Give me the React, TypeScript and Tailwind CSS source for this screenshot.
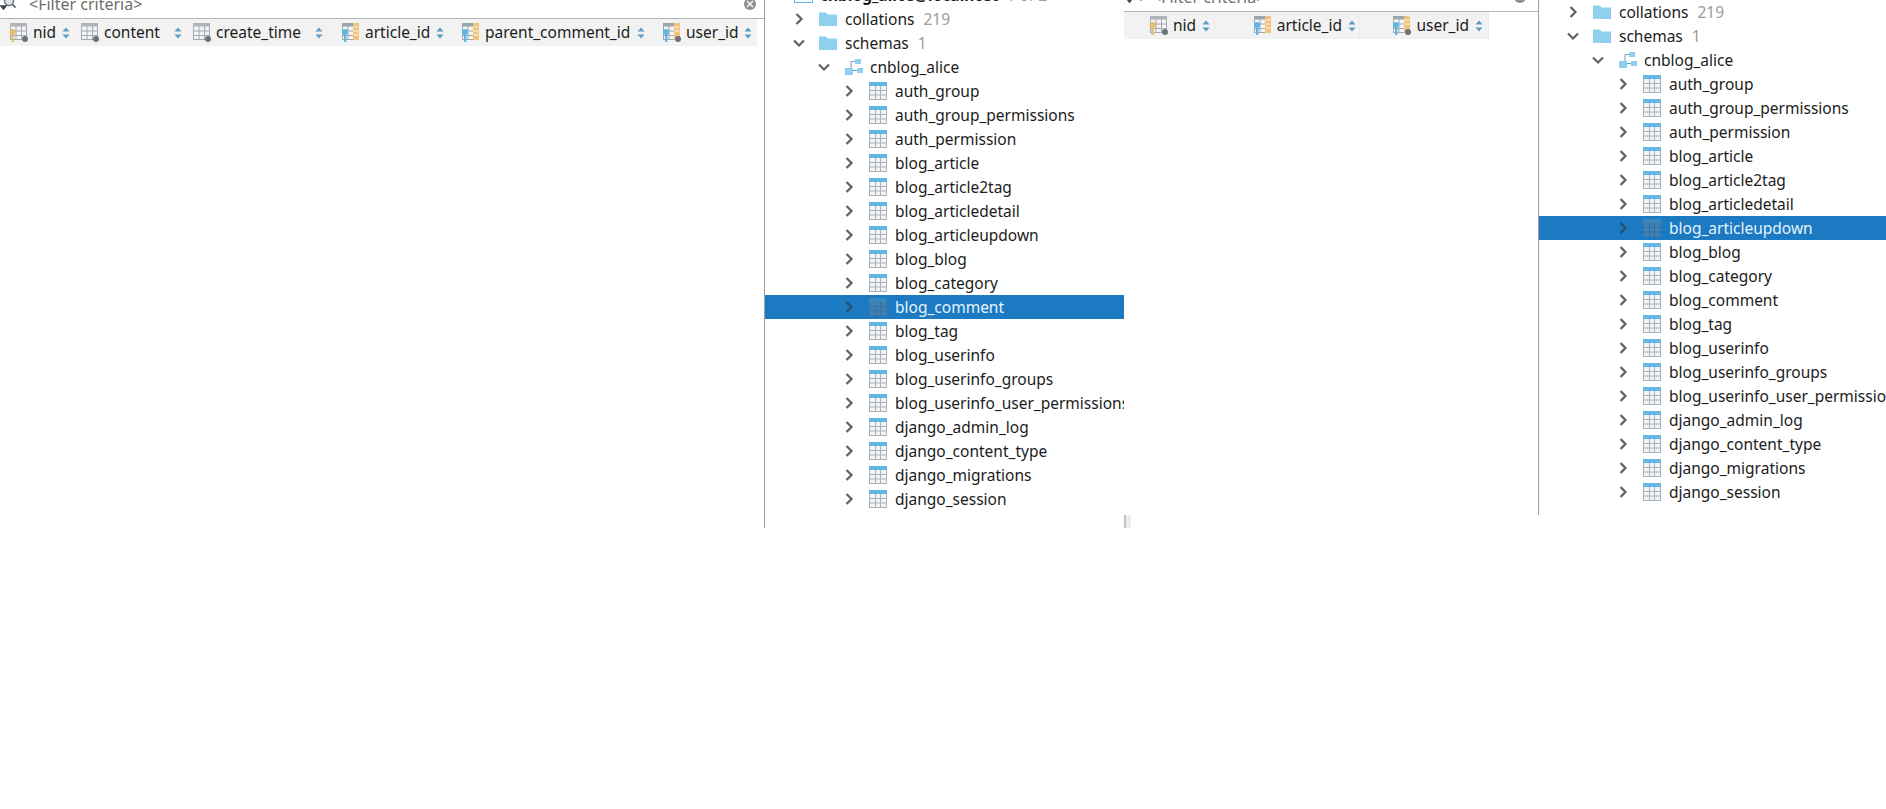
import React from "react";

const font = { fontFamily: '"Noto Sans", "Liberation Sans", sans-serif' };

function TableIcon({ selected = false }: { selected?: boolean }) {
  return (
    <svg width="18" height="18" viewBox="0 0 18 18" className="shrink-0">
      <rect x="0.5" y="0.5" width="17" height="17" fill={selected ? "#3f80b5" : "#f2f3f5"} stroke={selected ? "#3b78a8" : "#a9b2ba"} />
      <rect x="0" y="0" width="18" height="4" fill={selected ? "#3a86bd" : "#62b8e3"} />
      <path d="M6.5 4v14M11.5 4v14M0 8.5h18M0 13h18" stroke={selected ? "#34719f" : "#a9b2ba"} strokeWidth="1" fill="none" />
    </svg>
  );
}

function Chevron({ open = false, dark = false }: { open?: boolean; dark?: boolean }) {
  return (
    <svg width="14" height="14" viewBox="0 0 14 14" className="shrink-0">
      <path d={open ? "M2 4.5l5 5 5-5" : "M4.5 2l5 5-5 5"} fill="none" stroke={dark ? "#2a4d68" : "#5e6266"} strokeWidth="2.2" />
    </svg>
  );
}

function FolderIcon() {
  return (
    <svg width="18" height="16" viewBox="0 0 18 16" className="shrink-0">
      <path d="M0 1.5h7l1.5 2H18V15H0z" fill="#8fd0ee" />
    </svg>
  );
}

function SchemaIcon() {
  return (
    <svg width="18" height="18" viewBox="0 0 18 18" className="shrink-0">
      <rect x="10" y="1" width="6" height="5" fill="#8fd0ee" />
      <rect x="0" y="10" width="8" height="7" fill="#8fd0ee" />
      <rect x="12" y="10" width="6" height="5" fill="#8fd0ee" />
      <path d="M10 3.5H6V10M8 12.5h4" fill="none" stroke="#7a9cb0" strokeWidth="1" />
    </svg>
  );
}

function ColumnIcon({ kind }: { kind: "pk" | "plain" | "fk" | "fkdot" }) {
  return (
    <svg width="20" height="20" viewBox="0 0 20 20" className="shrink-0">
      <rect x="1.5" y="0.5" width="16" height="16" fill="#f4f5f6" stroke="#a3a9ae" />
      <rect x="1" y="0" width="17" height="3.5" fill={kind === "fk" || kind === "fkdot" ? "#9aa6ad" : "#b0b4b8"} />
      <path d="M7 3v14M12.5 3v14M1.5 8h16M1.5 12.5h16" stroke="#a3a9ae" fill="none" />
      {(kind === "fk" || kind === "fkdot") && <rect x="12" y="0" width="6" height="17" fill="#eec47e" />}
      {kind === "fk" && <path d="M12.5 4h5M12.5 8h5M12.5 12h5" stroke="#fff3dc" />}
      {kind === "fkdot" && <path d="M12.5 4h5M12.5 8h5" stroke="#fff3dc" />}
      {kind === "pk" && (
        <g>
          <circle cx="3.5" cy="9" r="3" fill="#e8bf6e" />
          <rect x="2.5" y="10" width="2.4" height="9" fill="#e8bf6e" />
        </g>
      )}
      {(kind === "fk" || kind === "fkdot") && (
        <g>
          <circle cx="4" cy="9" r="3" fill="#5cb8e0" />
          <rect x="3" y="10" width="2.4" height="9" fill="#5cb8e0" />
        </g>
      )}
      {(kind === "plain" || kind === "pk" || kind === "fkdot") && <circle cx="16" cy="16" r="3" fill="#6b7278" />}
    </svg>
  );
}

function SortIcon() {
  return (
    <svg width="8" height="12" viewBox="0 0 8 12" className="shrink-0">
      <path d="M4 0.5L7.5 4.5H0.5z" fill="#5b9cc4" />
      <path d="M4 11.5L0.5 7.5H7.5z" fill="#5b9cc4" />
    </svg>
  );
}

type Col = { label: string; kind: "pk" | "plain" | "fk" | "fkdot"; w: string; pad: string; sort: string };

function Column({ col, end = false }: { col: Col; end?: boolean }) {
  return (
    <div className={`${col.w} ${col.pad} flex h-full shrink-0 items-center ${end ? "justify-end border-r border-[#ececec]" : ""}`}>
      <ColumnIcon kind={col.kind} />
      <span className="ml-[4px] text-[15.5px] text-[#1c1c1c] whitespace-nowrap">{col.label}</span>
      {!end && <span className="flex-1" />}
      <span className={col.sort}><SortIcon /></span>
    </div>
  );
}

function Filter({ offset, right, gap }: { offset: string; right: string; gap: string }) {
  return (
    <div className={`flex items-center h-[18px] overflow-hidden ${offset}`}>
      <svg width="18" height="18" viewBox="0 0 18 18" className="shrink-0 -mt-[10px]">
        <circle cx="9" cy="6" r="4.5" fill="#dfe3e6" stroke="#6f7a82" strokeWidth="1.5" />
        <path d="M1 11h5l-2.5 3zM12.5 9.5l3 3" stroke="#444" strokeWidth="1.5" fill="#444" />
      </svg>
      <span className={`${gap} -mt-[10px] text-[16px] text-[#6e6e6e] whitespace-nowrap`}>&lt;Filter criteria&gt;</span>
      <span className="flex-1" />
      <span className={`${right} -mt-[10px] flex h-[12px] w-[12px] items-center justify-center rounded-full bg-[#8c8f92]`}>
        <svg width="8" height="8" viewBox="0 0 8 8"><path d="M1 1l6 6M7 1L1 7" stroke="#fff" strokeWidth="1.4" /></svg>
      </span>
    </div>
  );
}

const tables = [
  "auth_group",
  "auth_group_permissions",
  "auth_permission",
  "blog_article",
  "blog_article2tag",
  "blog_articledetail",
  "blog_articleupdown",
  "blog_blog",
  "blog_category",
  "blog_comment",
  "blog_tag",
  "blog_userinfo",
  "blog_userinfo_groups",
  "blog_userinfo_user_permissions",
  "django_admin_log",
  "django_content_type",
  "django_migrations",
  "django_session",
];

function Row({ children, indent, selected = false }: { children: React.ReactNode; indent: string; selected?: boolean }) {
  return (
    <div className={`flex h-[24px] items-center whitespace-nowrap text-[15.5px] ${indent} ${selected ? "bg-[#1b7ac2] text-[#e6f2fb]" : "text-[#1c1c1c]"}`}>
      {children}
    </div>
  );
}

function Tree({ selected, width, showConnection }: { selected: string; width: string; showConnection?: boolean }) {
  return (
    <div className={`${width} shrink-0 overflow-hidden`}>
      {showConnection && (
        <Row indent="pl-[29px]">
          <svg width="19" height="18" viewBox="0 0 19 18" className="shrink-0">
            <rect x="0.5" y="3.5" width="18" height="13" fill="#f4fafd" stroke="#6fb3d9" />
          </svg>
          <span className="ml-[7px] pt-[2px] font-bold">cnblog_alice@localhost</span>
          <span className="ml-[8px] pt-[2px] text-[#9b9b9b]">1 of 2</span>
        </Row>
      )}
      <Row indent="pl-[27px]">
        <Chevron />
        <span className="ml-[13px]"><FolderIcon /></span>
        <span className="ml-[8px] pt-[2px]">collations</span>
        <span className="ml-[9px] pt-[2px] text-[#9b9b9b]">219</span>
      </Row>
      <Row indent="pl-[27px]">
        <Chevron open />
        <span className="ml-[13px]"><FolderIcon /></span>
        <span className="ml-[8px] pt-[2px]">schemas</span>
        <span className="ml-[9px] pt-[2px] text-[#9b9b9b]">1</span>
      </Row>
      <Row indent="pl-[52px]">
        <Chevron open />
        <span className="ml-[14px]"><SchemaIcon /></span>
        <span className="ml-[7px] pt-[2px]">cnblog_alice</span>
      </Row>
      {tables.map((t) => (
        <Row key={t} indent="pl-[77px]" selected={t === selected}>
          <Chevron dark={t === selected} />
          <span className="ml-[13px]"><TableIcon selected={t === selected} /></span>
          <span className="ml-[8px] pt-[2px]">{t}</span>
        </Row>
      ))}
    </div>
  );
}

const mainCols: Col[] = [
  { label: "nid", kind: "pk", w: "w-[73px]", pad: "pl-[9px]", sort: "mr-[3px]" },
  { label: "content", kind: "plain", w: "w-[112px]", pad: "pl-[7px]", sort: "mr-[3px]" },
  { label: "create_time", kind: "plain", w: "w-[147px]", pad: "pl-[7px]", sort: "mr-[9px]" },
  { label: "article_id", kind: "fk", w: "w-[120px]", pad: "pl-[9px]", sort: "mr-[8px]" },
  { label: "parent_comment_id", kind: "fk", w: "w-[203px]", pad: "pl-[9px]", sort: "mr-[10px]" },
  { label: "user_id", kind: "fkdot", w: "w-[102px]", pad: "pl-[7px]", sort: "mr-[5px]" },
];

const sideCols: Col[] = [
  { label: "nid", kind: "pk", w: "w-[91px]", pad: "pr-[4px]", sort: "ml-[6px]" },
  { label: "article_id", kind: "fk", w: "w-[145px]", pad: "pr-[3px]", sort: "ml-[6px]" },
  { label: "user_id", kind: "fkdot", w: "w-[129px]", pad: "pr-[5px]", sort: "ml-[6px]" },
];

export default function App() {
  return (
    <div className="w-[1886px] h-[809px] overflow-hidden bg-white flex items-start" style={font}>
      <div className="w-[765px] h-[528px] shrink-0 border-r border-[#a0a0a0]">
        <Filter offset="pr-[8px]" right="mr-[0px]" gap="ml-[11px]" />
        <div className="border-t border-[#b4b4b4]">
          <div className="flex h-[27px] w-[757px] items-center bg-[#f2f2f2]">
            {mainCols.map((c) => (
              <Column key={c.label} col={c} />
            ))}
          </div>
        </div>
      </div>
      <div className="h-[528px] overflow-hidden shrink-0">
        <div className="-mt-[17px]">
          <Tree selected="blog_comment" width="w-[359px]" showConnection />
        </div>
      </div>
      <div className="w-[414px] h-[528px] shrink-0 flex flex-col">
        <div className="h-[11px] overflow-hidden border-b border-[#b4b4b4] box-content">
          <div className="-mt-[7px] pl-[2px]"><Filter offset="pr-[12px]" right="mr-[0px]" gap="ml-[8px]" /></div>
        </div>
        <div className="flex h-[27px] w-[365px] items-center bg-[#f2f2f2]">
          {sideCols.map((c) => (
            <Column key={c.label} col={c} end />
          ))}
        </div>
        <div className="flex-1" />
        <div className="h-[13px] w-[7px] bg-[#ededed] border-l-2 border-[#c4c4c4]" />
      </div>
      <div className="h-[515px] flex-1 border-l border-[#a0a0a0] overflow-hidden">
        <Tree selected="blog_articleupdown" width="w-[348px]" />
      </div>
    </div>
  );
}
